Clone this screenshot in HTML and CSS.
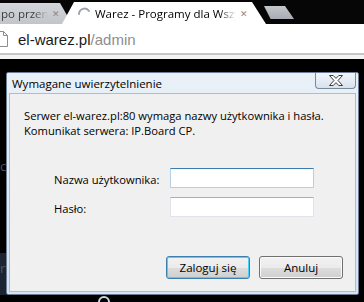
FILE: index.html
```html
<!DOCTYPE html>
<html>
<head>
  <meta charset="UTF-8">
  <title>Wymagane uwierzytelnienie</title>
  <link rel="stylesheet" href="styles.css">
</head>
<body>

  <div class="tabstrip">
    <div class="tab tab-back">
      <span class="tab-title">po przeni</span>
      <span class="tab-close">✕</span>
    </div>
    <div class="tab tab-front">
      <svg class="throbber" width="14" height="14" viewBox="0 0 14 14">
        <path d="M2 8 A5.5 5.5 0 0 1 12 5" fill="none" stroke="#9aa3ad" stroke-width="2" stroke-linecap="round"/>
      </svg>
      <span class="tab-title">Warez - Programy dla Wszystkich</span>
      <span class="tab-close">✕</span>
    </div>
    <div class="newtab"></div>
  </div>

  <div class="toolbar">
    <div class="omnibox">
      <svg class="page-icon" width="12" height="16" viewBox="0 0 12 16">
        <path d="M0.5 0.5 H7.5 L11.5 4.5 V15.5 H0.5 Z M7.5 0.5 V4.5 H11.5" fill="#fff" stroke="#8c8c8c"/>
      </svg>
      <span class="url"><span class="host">el-warez.pl</span><span class="path">/admin</span></span>
    </div>
  </div>

  <div class="page">
    <div class="side">
      <div class="side-bit bit-a">c</div>
      <div class="side-bit bit-b">rt</div>
    </div>

    <div class="main">
      <div class="dialog">
        <div class="titlebar">
          <span class="title">Wymagane uwierzytelnienie</span>
          <button class="close-btn">
            <svg width="14" height="11" viewBox="0 0 14 11">
              <polygon points="0.5,0.5 4.2,0.5 7,3.4 9.8,0.5 13.5,0.5 9,5.5 13.5,10.5 9.8,10.5 7,7.6 4.2,10.5 0.5,10.5 5,5.5" fill="#fff" stroke="#3b3b3b"/>
            </svg>
          </button>
        </div>

        <div class="content">
          <p class="message">Serwer el-warez.pl:80 wymaga nazwy użytkownika i hasła.<br>Komunikat serwera: IP.Board CP.</p>

          <div class="form">
            <div class="row">
              <label class="label">Nazwa użytkownika:</label>
              <div class="input focused"></div>
            </div>
            <div class="row">
              <label class="label">Hasło:</label>
              <div class="input"></div>
            </div>
          </div>

          <div class="buttons">
            <button class="btn btn-default">Zaloguj się</button>
            <button class="btn">Anuluj</button>
          </div>
        </div>
      </div>

      <div class="below">
        <svg width="14" height="6" viewBox="0 0 14 6">
          <path d="M2 6 A5 5 0 0 1 12 6" fill="none" stroke="#cfd6de" stroke-width="2"/>
        </svg>
      </div>
    </div>
  </div>

</body>
</html>
```

FILE: styles.css
```css
body {
  margin: 0;
  width: 364px;
  height: 302px;
  overflow: hidden;
  background-color: #000;
  font-family: "Segoe UI", "Open Sans", sans-serif;
  font-size: 11.2px;
  color: #000;
}

/* tabs */

.tabstrip {
  display: flex;
  align-items: flex-end;
  height: 24px;
  background-color: #060606;
}

.tab {
  display: flex;
  align-items: center;
  box-sizing: border-box;
  font-size: 11.5px;
}

.tab-back {
  width: 72px;
  height: 21px;
  padding-left: 1px;
  background: linear-gradient(#d3d6da, #c1c5ca);
  clip-path: polygon(0 0, 60px 0, 72px 100%, 0 100%);
  color: #3c3c3c;
}

.tab-back .tab-title {
  width: 47px;
  overflow: hidden;
  white-space: nowrap;
  -webkit-mask-image: linear-gradient(to right, #000 70%, transparent);
}

.tab-front {
  width: 204px;
  height: 22px;
  margin-left: -10px;
  padding-left: 15px;
  background-color: #fff;
  clip-path: polygon(0 100%, 12px 0, 190px 0, 204px 100%);
}

.throbber {
  margin-right: 4px;
}

.tab-front .tab-title {
  width: 141px;
  overflow: hidden;
  white-space: nowrap;
  -webkit-mask-image: linear-gradient(to right, #000 88%, transparent);
}

.tab-close {
  font-size: 9px;
  color: #8a8a8a;
  margin-left: 4px;
}

.newtab {
  width: 30px;
  height: 13px;
  margin: 0 0 5px -2px;
  background: linear-gradient(#c3c7cc, #a9adb3);
  clip-path: polygon(0 0, 70% 0, 100% 100%, 22% 100%);
}

/* toolbar */

.toolbar {
  height: 35px;
  background-color: #f3f3f3;
}

.omnibox {
  display: flex;
  align-items: center;
  height: 29px;
  background-color: #fff;
  border-bottom: 2px solid #c6c6c6;
}

.page-icon {
  margin-left: -4px;
  margin-right: 10px;
}

.url {
  font-family: "Liberation Sans", Arial, sans-serif;
  font-size: 15px;
  padding-top: 1px;
}

.host {
  color: #1a1a1a;
}

.path {
  color: #8d8d8d;
}

/* page behind the dialog */

.page {
  display: flex;
  height: 243px;
}

.side {
  width: 6px;
  display: flex;
  flex-direction: column;
  overflow: hidden;
}

.side-bit {
  color: #4d545c;
  font-size: 13px;
  line-height: 14px;
}

.bit-a {
  margin-top: 100px;
}

.bit-b {
  margin-top: 80px;
  height: 34px;
  padding-top: 8px;
  background-color: #1b2430;
}

.main {
  display: flex;
  flex-direction: column;
}

/* dialog */

.dialog {
  width: 353px;
  height: 224px;
  margin-top: 13px;
  box-sizing: border-box;
  border: 1px solid #6c7e96;
  border-radius: 2px;
  padding: 0 2px 2px 2px;
  background: linear-gradient(#e9f0f8, #d6e3f2);
  display: flex;
  flex-direction: column;
}

.titlebar {
  display: flex;
  justify-content: space-between;
  align-items: flex-start;
  height: 20px;
}

.title {
  padding: 3px 0 0 3px;
  font-size: 11.5px;
}

.close-btn {
  width: 41px;
  height: 16px;
  padding: 0;
  border: 1px solid #7b889a;
  border-top: none;
  border-radius: 0 0 4px 4px;
  background: linear-gradient(#f2f6fb, #d8e2ee);
  display: flex;
  align-items: center;
  justify-content: center;
}

.content {
  flex: 1;
  background-color: #f0f0f0;
  border: 1px solid #a8bdd6;
  display: flex;
  flex-direction: column;
}

.message {
  margin: 14px 0 0 14px;
  line-height: 15px;
}

.form {
  display: flex;
  flex-direction: column;
  gap: 9px;
  margin-top: 30px;
  margin-left: 44px;
}

.row {
  display: flex;
  align-items: center;
  height: 20px;
}

.label {
  width: 116px;
  padding-top: 2px;
}

.input {
  width: 144px;
  height: 20px;
  box-sizing: border-box;
  background-color: #fff;
  border: 1px solid #e2e3ea;
  border-top-color: #abadb3;
}

.input.focused {
  border-color: #b5cfe7;
  border-top-color: #3d7bad;
}

.buttons {
  display: flex;
  justify-content: flex-end;
  gap: 9px;
  margin-top: 39px;
  padding-right: 12px;
}

.btn {
  width: 84px;
  height: 23px;
  padding: 0;
  font-family: "Segoe UI", "Open Sans", sans-serif;
  font-size: 11.5px;
  color: #000;
  border: 1px solid #707070;
  border-radius: 3px;
  background: linear-gradient(#f2f2f2 0%, #ebebeb 50%, #dddddd 51%, #cfcfcf 100%);
  box-shadow: inset 0 0 0 1px #fbfbfb;
}

.btn-default {
  border-color: #3c7fb1;
  box-shadow: inset 0 0 0 1px #48d2f7;
}

.below {
  padding: 1px 0 0 91px;
  line-height: 0;
}
```
